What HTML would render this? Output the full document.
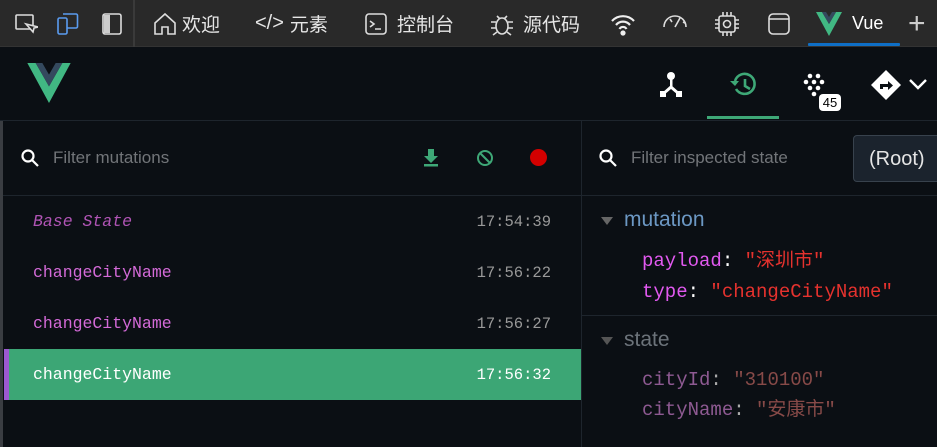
<!DOCTYPE html>
<html><head><meta charset="utf-8"><style>
*{margin:0;padding:0;box-sizing:border-box}
body{width:937px;height:447px;overflow:hidden;background:#0b0f14;font-family:"Liberation Sans","Noto Sans CJK SC",sans-serif;position:relative;color:#ddd}
.abs{position:absolute}
.top{left:0;top:0;width:937px;height:47px;background:#292929;border-bottom:1px solid #333}
.tab{top:0;height:47px;display:flex;align-items:center;color:#e6e6e6;font-size:19px}
.mono{font-family:"Liberation Mono","DejaVu Sans Mono","Noto Sans CJK SC",monospace}
.row{left:4px;width:577px;height:51px;font-size:16.5px}
.row .n{position:absolute;left:29px;top:16px;color:#d46ad8}
.row .t{position:absolute;right:30px;top:17px;color:#999;font-size:15.5px}
.st{font-size:19px;position:absolute;left:642px;line-height:22px;height:22px;white-space:nowrap}
</style></head><body>
<div class="abs top"></div>
<div class="abs" style="left:133px;top:0;width:2px;height:47px;background:#3a3a3a"></div>
<svg class="abs" style="left:14px;top:12px" width="24" height="24" viewBox="0 0 24 24" fill="none" stroke="#ddd" stroke-width="1.6"><rect x="2" y="3" width="17" height="14" rx="1"/><path d="M12 12l7 8 1-4 4-1z" fill="#292929"/></svg>
<svg class="abs" style="left:55px;top:11px" width="26" height="26" viewBox="0 0 26 26" fill="none" stroke="#5a9cf0" stroke-width="1.6"><rect x="3" y="7" width="9" height="16" rx="1.5"/><path d="M8 3h13a1.5 1.5 0 0 1 1.5 1.5v11a1.5 1.5 0 0 1-1.5 1.5h-9"/></svg>
<svg class="abs" style="left:101px;top:12px" width="22" height="24" viewBox="0 0 22 24" fill="none" stroke="#ddd" stroke-width="1.6"><rect x="2" y="2" width="18" height="20" rx="2"/><rect x="3" y="3" width="6" height="18" fill="#ccc" stroke="none"/></svg>
<div class="abs tab" style="left:153px"><svg width="24" height="26" viewBox="0 0 24 26" fill="none" stroke="#ddd" stroke-width="1.6"><path d="M2 12L12 3l10 9v11h-7v-7h-6v7H2z"/></svg><span style="margin-left:5px">欢迎</span></div>
<div class="abs tab" style="left:255px"><span style="font-size:20px">&lt;/&gt;</span><span style="margin-left:6px">元素</span></div>
<div class="abs tab" style="left:364px"><svg width="24" height="24" viewBox="0 0 24 24" fill="none" stroke="#ddd" stroke-width="1.6"><rect x="2" y="2" width="20" height="20" rx="3"/><path d="M6 9l4 3-4 3M11 17h6"/></svg><span style="margin-left:9px">控制台</span></div>
<div class="abs tab" style="left:488px"><svg width="28" height="28" viewBox="0 0 28 28" fill="none" stroke="#ddd" stroke-width="1.6"><ellipse cx="14" cy="16" rx="6" ry="8"/><path d="M9 6l3 3M19 6l-3 3M3 12h5M20 12h5M3 18h5M20 18h5M5 25l4-3M23 25l-4-3"/></svg><span style="margin-left:7px">源代码</span></div>
<div class="abs tab" style="left:609px"><svg width="28" height="26" viewBox="0 0 28 26" fill="none" stroke="#eee" stroke-width="2.2"><path d="M3 10a15 15 0 0 1 22 0M7 14a9 9 0 0 1 14 0M10.5 18a4 4 0 0 1 7 0"/><circle cx="14" cy="22" r="1.5" fill="#eee"/></svg></div>
<div class="abs tab" style="left:661px"><svg width="28" height="26" viewBox="0 0 28 26" fill="none" stroke="#ddd" stroke-width="1.6"><path d="M3 16a11 11 0 0 1 22 0M14 16l5-9M9 8l2 3M22 11l2 1"/></svg></div>
<div class="abs tab" style="left:714px"><svg width="26" height="26" viewBox="0 0 26 26" fill="none" stroke="#ddd" stroke-width="1.6"><rect x="5" y="5" width="16" height="16" rx="2"/><circle cx="13" cy="13" r="3.5"/><path d="M9 1v4M13 1v4M17 1v4M9 21v4M13 21v4M17 21v4M1 9h4M1 13h4M1 17h4M21 9h4M21 13h4M21 17h4"/></svg></div>
<div class="abs tab" style="left:767px"><svg width="24" height="26" viewBox="0 0 24 26" fill="none" stroke="#ddd" stroke-width="1.6"><rect x="2" y="3" width="20" height="20" rx="4"/><path d="M2 8h20"/></svg></div>
<div class="abs tab" style="left:816px"><svg width="26" height="24" viewBox="0 0 26 24"><path d="M0 0h6l7 12 7-12h6L13 24z" fill="#41b883"/><path d="M6 0h4l3 5 3-5h4l-7 12z" fill="#34495e"/></svg><span style="margin-left:10px;color:#fff;font-size:18px">Vue</span></div>
<div class="abs" style="left:808px;top:43px;width:92px;height:3px;background:#0f6fc6;border-radius:1px"></div>
<div class="abs tab" style="left:908px;font-size:30px;font-weight:200;color:#ccc">+</div>

<svg class="abs" style="left:26px;top:63px" width="46" height="40" viewBox="0 0 26 24"><path d="M0 0h5l8 14 8-14h5L13 24z" fill="#41b883"/><path d="M5 0h4l4 7 4-7h4l-8 14z" fill="#34495e"/></svg>
<svg class="abs" style="left:656px;top:70px" width="30" height="30" viewBox="0 0 30 30" fill="#fff"><circle cx="15" cy="6" r="4"/><rect x="14" y="9" width="2.5" height="8"/><path d="M15 15l-9 8 2 2 7-6 7 6 2-2z"/><rect x="4" y="21" width="6" height="6"/><rect x="20" y="21" width="6" height="6"/></svg>
<svg class="abs" style="left:726px;top:69px" width="34" height="32" viewBox="0 0 34 32" fill="none" stroke="#3ea877" stroke-width="2.6"><path d="M9 12a10 10 0 1 1 1 8"/><path d="M19 10v7l5 3"/><path d="M4 12l5 5 4-5" fill="#3ea877" stroke="none"/></svg>
<div class="abs" style="left:707px;top:116px;width:72px;height:3px;background:#3ea877"></div>
<svg class="abs" style="left:802px;top:71px" width="28" height="28" viewBox="0 0 28 28" fill="#fff"><circle cx="8" cy="5" r="2.3"/><circle cx="16" cy="5" r="2.3"/><circle cx="4" cy="11" r="2.3"/><circle cx="12" cy="11" r="2.3"/><circle cx="20" cy="11" r="2.3"/><circle cx="8" cy="17" r="2.3"/><circle cx="16" cy="17" r="2.3"/><circle cx="12" cy="23" r="2.3"/></svg>
<div class="abs" style="left:819px;top:94px;width:22px;height:17px;background:#fff;border-radius:4px;color:#000;font-size:13px;text-align:center;line-height:17px">45</div>
<svg class="abs" style="left:869px;top:68px" width="34" height="34" viewBox="0 0 34 34"><path d="M17 2l15 15-15 15L2 17z" fill="#fff"/><path d="M11 21v-5h8v-3l5 4.5-5 4.5v-3h-5v2z" fill="#0b0f14"/></svg>
<svg class="abs" style="left:908px;top:77px" width="20" height="14" viewBox="0 0 20 14" fill="none" stroke="#fff" stroke-width="2.4"><path d="M2 3l8 8 8-8"/></svg>

<div class="abs" style="left:0;top:120px;width:937px;height:1px;background:#1e252d"></div>
<div class="abs" style="left:0;top:121px;width:3px;height:326px;background:#3a3d42"></div>
<div class="abs" style="left:581px;top:121px;width:1px;height:326px;background:#1e252d"></div>

<svg class="abs" style="left:20px;top:148px" width="20" height="20" viewBox="0 0 20 20" fill="none" stroke="#fff" stroke-width="2.2"><circle cx="8" cy="8" r="5.5"/><path d="M12 12l6 6"/></svg>
<div class="abs" style="left:53px;top:148px;font-size:17px;color:#727579">Filter mutations</div>
<svg class="abs" style="left:422px;top:148px" width="18" height="20" viewBox="0 0 18 20" fill="#3ea877"><path d="M6 1h6v7h4l-7 7-7-7h4z"/><rect x="2" y="16" width="14" height="2.5"/></svg>
<svg class="abs" style="left:475px;top:148px" width="20" height="20" viewBox="0 0 20 20" fill="none" stroke="#3ea877" stroke-width="2"><circle cx="10" cy="10" r="7"/><path d="M5 5l10 10"/></svg>
<div class="abs" style="left:530px;top:149px;width:17px;height:17px;border-radius:50%;background:#d40000"></div>
<div class="abs" style="left:3px;top:195px;width:578px;height:1px;background:#1e252d"></div>

<div class="abs row mono" style="top:196px"><span class="n" style="font-style:italic;color:#b054b5">Base State</span><span class="t">17:54:39</span></div>
<div class="abs row mono" style="top:247px"><span class="n">changeCityName</span><span class="t">17:56:22</span></div>
<div class="abs row mono" style="top:298px"><span class="n">changeCityName</span><span class="t">17:56:27</span></div>
<div class="abs row mono" style="top:349px;background:#3ca675"><span class="n" style="color:#fff">changeCityName</span><span class="t" style="color:#fff">17:56:32</span></div>
<div class="abs" style="left:4px;top:349px;width:5px;height:51px;background:#9b59d0"></div>

<svg class="abs" style="left:598px;top:148px" width="20" height="20" viewBox="0 0 20 20" fill="none" stroke="#fff" stroke-width="2.2"><circle cx="8" cy="8" r="5.5"/><path d="M12 12l6 6"/></svg>
<div class="abs" style="left:631px;top:148px;font-size:17px;color:#727579">Filter inspected state</div>
<div class="abs" style="left:853px;top:135px;width:100px;height:47px;background:#1b232d;border:1px solid #38424d;border-radius:4px;font-size:20px;color:#e5e5e5;padding:12px 0 0 15px">(Root)</div>
<div class="abs" style="left:582px;top:195px;width:355px;height:1px;background:#1e252d"></div>
<div class="abs" style="left:601px;top:217px;width:0;height:0;border-left:6px solid transparent;border-right:6px solid transparent;border-top:8px solid #666"></div>
<div class="abs" style="left:624px;top:208px;font-size:21px;color:#6c98c4">mutation</div>
<div class="st mono" style="top:250px"><span style="color:#e259f0">payload</span><span style="color:#fff">: </span><span style="color:#e5322e">"深圳市"</span></div>
<div class="st mono" style="top:281px"><span style="color:#e259f0">type</span><span style="color:#fff">: </span><span style="color:#e5322e">"changeCityName"</span></div>
<div class="abs" style="left:582px;top:315px;width:355px;height:1px;background:#1e252d"></div>
<div class="abs" style="left:601px;top:337px;width:0;height:0;border-left:6px solid transparent;border-right:6px solid transparent;border-top:8px solid #555"></div>
<div class="abs" style="left:624px;top:328px;font-size:21px;color:#6c737a">state</div>
<div class="st mono" style="top:369px"><span style="color:#8e5a92">cityId</span><span style="color:#aaa">: </span><span style="color:#874a48">"310100"</span></div>
<div class="st mono" style="top:399px"><span style="color:#8e5a92">cityName</span><span style="color:#aaa">: </span><span style="color:#874a48">"安康市"</span></div>
</body></html>
